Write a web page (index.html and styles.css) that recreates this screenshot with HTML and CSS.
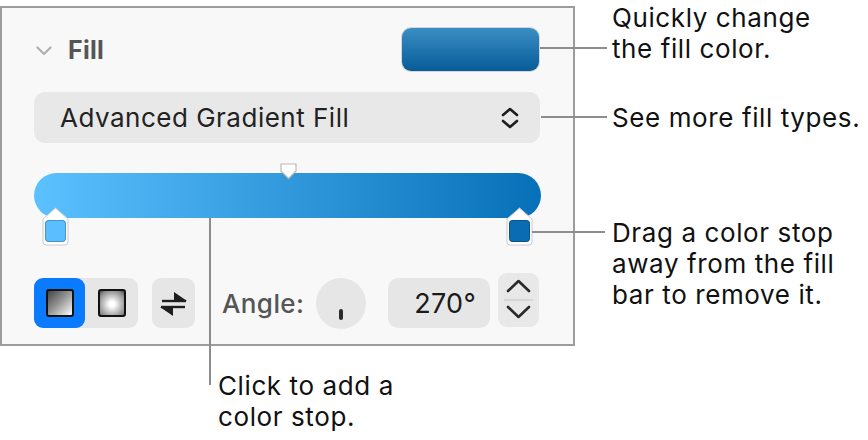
FILE: index.html
```html
<!DOCTYPE html>
<html lang="en">
<head>
<meta charset="utf-8">
<title>Fill</title>
<link rel="stylesheet" href="styles.css">
</head>
<body>
<div class="stage">
  <section class="panel">
    <div class="header">
      <div class="title">
        <svg class="disclosure" width="16" height="10" viewBox="0 0 16 10"><path d="M1.5 1.5 L8 8 L14.5 1.5" fill="none" stroke="#b0b0b0" stroke-width="2.2" stroke-linecap="round" stroke-linejoin="round"/></svg>
        <span class="title-text">Fill</span>
      </div>
      <div class="well"></div>
    </div>

    <div class="popup">
      <span class="popup-text">Advanced Gradient Fill</span>
      <svg class="updown" width="18" height="22" viewBox="0 0 18 22"><path d="M2 8 L9 2 L16 8 M2 14 L9 20 L16 14" fill="none" stroke="#1e1e1e" stroke-width="2.6" stroke-linecap="round" stroke-linejoin="round"/></svg>
    </div>

    <div class="bar">
      <svg class="midpoint" width="19" height="17" viewBox="0 0 19 17"><path d="M2 1 H17 V8 L9.5 15.5 L2 8 Z" fill="#fff" stroke="#b9b9b9" stroke-width="1.2" stroke-linejoin="round"/></svg>
      <div class="stop stop-left">
        <svg width="27" height="39" viewBox="0 0 27 39"><path d="M1 12 L13.5 1 L26 12 V35 Q26 38 23 38 H4 Q1 38 1 35 Z" fill="#fff" stroke="#cacaca" stroke-width="1" stroke-linejoin="round"/></svg>
        <span class="chip chip-light"></span>
      </div>
      <div class="stop stop-right">
        <svg width="27" height="39" viewBox="0 0 27 39"><path d="M1 12 L13.5 1 L26 12 V35 Q26 38 23 38 H4 Q1 38 1 35 Z" fill="#fff" stroke="#cacaca" stroke-width="1" stroke-linejoin="round"/></svg>
        <span class="chip chip-dark"></span>
      </div>
    </div>

    <div class="controls">
      <div class="segmented">
        <div class="seg seg-on"><span class="swatch swatch-linear"></span></div>
        <div class="seg"><span class="swatch swatch-radial"></span></div>
      </div>
      <div class="swap">
        <svg width="43" height="50" viewBox="0 0 43 50"><path d="M10 23 H34" stroke="#1e1e1e" stroke-width="2.4"/><path d="M22 14 L22 23 L35 23 Z" fill="#1e1e1e"/><path d="M9 29 H33" stroke="#1e1e1e" stroke-width="2.4"/><path d="M8 29 L21 29 L21 38 Z" fill="#1e1e1e"/></svg>
      </div>
      <span class="angle-label">Angle:</span>
      <div class="dial"><span class="tick"></span></div>
      <div class="value">270°</div>
      <div class="stepper">
        <svg width="41" height="54" viewBox="0 0 41 54"><path d="M10 18 L20.5 8 L31 18" fill="none" stroke="#2a2a2a" stroke-width="2.6" stroke-linecap="round" stroke-linejoin="round"/><path d="M6 27 H35" stroke="#cfcfcf" stroke-width="1.5"/><path d="M10 34 L20.5 44 L31 34" fill="none" stroke="#2a2a2a" stroke-width="2.6" stroke-linecap="round" stroke-linejoin="round"/></svg>
      </div>
    </div>
  </section>

  <div class="callout c-well"><span class="leader"></span><p>Quickly change<br>the fill color.</p></div>
  <div class="callout c-popup"><span class="leader"></span><p>See more fill types.</p></div>
  <div class="callout c-stop"><span class="leader"></span><p>Drag a color stop<br>away from the fill<br>bar to remove it.</p></div>
  <div class="callout-v"><span class="vleader"></span><p>Click to add a<br>color stop.</p></div>
</div>
</body>
</html>
```

FILE: styles.css
```css
* { box-sizing: border-box; }
html, body { margin: 0; padding: 0; background: #ffffff; }
body { font-family: Inter, "Liberation Sans", sans-serif; color: #111; }

.stage { position: relative; width: 868px; height: 440px; padding-top: 6px; }

.panel {
  width: 575px;
  border: 2px solid #9c9c9c;
  background: #f8f8f8;
  padding: 20px 34px 16px 32px;
}

.header { display: flex; align-items: center; justify-content: space-between; height: 43px; }
.title { display: flex; align-items: center; }
.disclosure { margin-left: 2px; margin-top: 2px; }
.title-text { margin-left: 16px; font-weight: 700; font-size: 25px; color: #555; letter-spacing: 0.3px; }
.well {
  width: 137px; height: 43px; border-radius: 9px;
  background: linear-gradient(#3b8ec3, #075c99);
  box-shadow: 0 0 0 1px #d6d6d6;
}

.popup {
  margin-top: 21px; height: 51px; border-radius: 11px; background: #e8e8e8;
  display: flex; align-items: center; justify-content: space-between;
  padding: 0 21px 0 26px; width: 506px;
}
.popup-text { font-size: 26px; color: #222; letter-spacing: 0.5px; }

.bar {
  position: relative; margin-top: 30px; height: 45px; width: 507px; border-radius: 23px;
  background: linear-gradient(90deg, #5cc1ff, #0670b8);
}
.midpoint { position: absolute; left: 245px; top: -10px; }
.stop { position: absolute; top: 34px; width: 27px; height: 39px; }
.stop svg { display: block; }
.stop-left { left: 8px; }
.stop-right { left: 472px; }
.chip {
  position: absolute; left: 3px; top: 13px; width: 21px; height: 22px; border-radius: 4px;
  box-shadow: inset 0 0 0 1px rgba(0,0,0,0.22);
}
.chip-light { background: #5bbfff; }
.chip-dark { background: #0a6db3; }

.controls { display: flex; align-items: center; margin-top: 60px; height: 50px; }
.segmented { display: flex; height: 50px; border-radius: 9px; background: #e6e6e6; }
.seg { width: 53px; height: 50px; display: flex; align-items: center; justify-content: center; border-radius: 9px; }
.seg-on { width: 51px; background: #0a7aff; }
.swatch { width: 28px; height: 28px; border: 2.5px solid #111; border-radius: 3px; }
.swatch-linear { background: linear-gradient(135deg, #444 0%, #999 50%, #fff 100%); }
.swatch-radial { background: radial-gradient(circle at 50% 55%, #fff 0%, #fff 15%, #888 80%, #444 100%); }
.swap { margin-left: 14px; width: 43px; height: 50px; border-radius: 9px; background: #e6e6e6; }
.swap svg { display: block; }
.angle-label { margin-left: 27px; font-size: 26px; font-weight: 500; color: #555; letter-spacing: 0.4px; }
.dial {
  margin-left: 12px; width: 51px; height: 51px; border-radius: 50%; background: #e6e6e6;
  display: flex; justify-content: center;
}
.tick { width: 3.5px; height: 11px; margin-top: 31px; border-radius: 2px; background: #2a2a2a; }
.value {
  margin-left: 22px; width: 105px; height: 50px; border-radius: 10px; background: #e6e6e6;
  display: flex; align-items: center; justify-content: flex-end; padding-right: 14px;
  font-size: 27px; color: #1a1a1a; letter-spacing: 0.3px;
}
.stepper { margin-left: 8px; align-self: flex-start; margin-top: -5px; width: 41px; height: 54px; border-radius: 9px; background: #e8e8e8; }
.stepper svg { display: block; }

.callout { position: absolute; display: flex; align-items: flex-start; }
.callout p, .callout-v p { margin: 0; font-size: 26px; line-height: 31px; color: #111; letter-spacing: 0.6px; }
.leader { display: block; height: 2px; background: #8d8d8d; }
.c-well { left: 540px; top: 2px; }
.c-well .leader { width: 67px; margin-top: 45px; margin-right: 5px; }
.c-popup { left: 541px; top: 102px; }
.c-popup .leader { width: 66px; margin-top: 14px; margin-right: 5px; }
.c-stop { left: 532px; top: 217px; }
.c-stop .leader { width: 73px; margin-top: 14px; margin-right: 7px; }
.callout-v { position: absolute; left: 209px; top: 218px; display: flex; align-items: flex-start; }
.vleader { display: block; width: 2px; height: 167px; background: #8d8d8d; }
.callout-v p { margin: 152px 0 0 7px; }
```
